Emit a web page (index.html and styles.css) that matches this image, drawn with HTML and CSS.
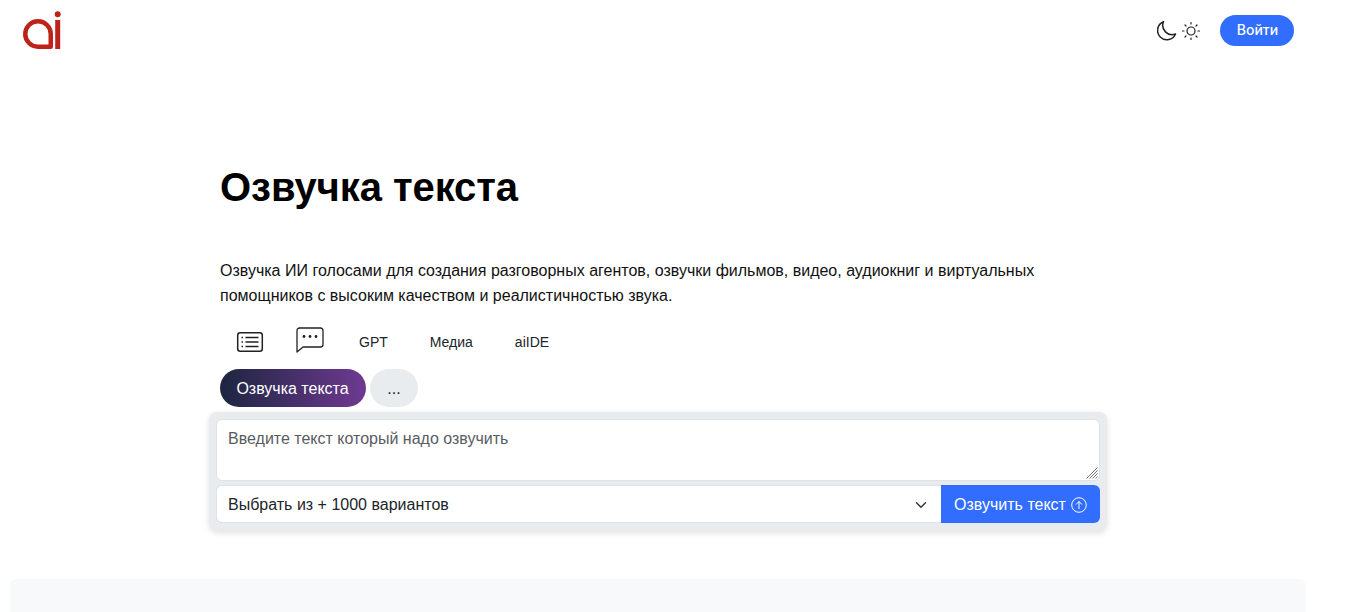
FILE: index.html
```html
<!DOCTYPE html>
<html lang="ru">
<head>
  <meta charset="UTF-8" />
  <meta name="viewport" content="width=device-width, initial-scale=1.0"/>
  <title>Озвучка текста</title>
  <link rel="stylesheet" href="styles.css">
</head>
<body>
  <div class="header">
    <a href="#" class="logo">
      <svg width="40" height="39" viewBox="0 0 40 39">
        <path d="M28.750 35.750 H16 A12.750 12.750 0 1 1 28.750 23 Z" fill="none" stroke="#bd2319" stroke-width="4.500" stroke-linejoin="round"/>
        <circle cx="35.700" cy="3.200" r="3" fill="#bd2319"/>
        <rect x="33.200" y="9" width="5" height="29" fill="#bd2319"/>
      </svg>
    </a>
    <div class="header-right">
      <div class="theme-icons">
        <svg width="20" height="20" viewBox="0 0 20 20">
          <path d="M6.500 .8 A9.300 9.300 0 1 0 18.500 13 A9.300 9.300 0 0 1 6.500 .8 Z" fill="none" stroke="#222" stroke-width="1.500" stroke-linejoin="round"/>
        </svg>
        <svg width="20" height="20" viewBox="0 0 20 20">
          <circle cx="10" cy="10" r="4" fill="none" stroke="#222" stroke-width="1.200"/>
          <path d="M10 1.500 V3 M10 17 V18.500 M1.500 10 H3 M17 10 H18.500 M4 4 L5 5 M15 15 L16 16 M4 16 L5 15 M15 5 L16 4" stroke="#222" stroke-width="1.200" stroke-linecap="round"/>
        </svg>
      </div>
      <button class="login-btn">Войти</button>
    </div>
  </div>

  <div class="main">
    <h1>Озвучка текста</h1>
    <p class="lead">Озвучка ИИ голосами для создания разговорных агентов, озвучки фильмов, видео, аудиокниг и виртуальных помощников с высоким качеством и реалистичностью звука.</p>

    <div class="nav-tabs">
      <a href="#" class="nav-item nav-icon">
        <svg width="28" height="22" viewBox="0 0 28 22">
          <rect x="1.700" y="1.700" width="24.600" height="18.600" rx="2.500" fill="none" stroke="#222" stroke-width="1.500"/>
          <path d="M9.500 6.500 H22.500 M9.500 11 H22.500 M9.500 15.500 H22.500 M5.500 6.500 H7 M5.500 11 H7 M5.500 15.500 H7" stroke="#222" stroke-width="1.500"/>
        </svg>
      </a>
      <a href="#" class="nav-item nav-icon nav-chat">
        <svg width="28" height="26" viewBox="0 0 28 26">
          <path d="M3.500 1 H24.500 A2.500 2.500 0 0 1 27 3.500 V17.500 A2.500 2.500 0 0 1 24.500 20 H7 L1 25 V3.500 A2.500 2.500 0 0 1 3.500 1 Z" fill="none" stroke="#222" stroke-width="1.300" stroke-linejoin="round"/>
          <circle cx="8" cy="9.500" r="1.400" fill="#222"/>
          <circle cx="14" cy="9.500" r="1.400" fill="#222"/>
          <circle cx="20" cy="9.500" r="1.400" fill="#222"/>
        </svg>
      </a>
      <a href="#" class="nav-item">GPT</a>
      <a href="#" class="nav-item">Медиа</a>
      <a href="#" class="nav-item">aiIDE</a>
    </div>

    <div class="pills">
      <button class="pill pill-active">Озвучка текста</button>
      <button class="pill">...</button>
    </div>

    <div class="tts-form">
      <div class="tts-text-wrap">
        <textarea class="tts-text" placeholder="Введите текст который надо озвучить"></textarea>
        <svg class="tts-grip" width="12" height="12" viewBox="0 0 12 12">
          <path d="M11.500 .5 L.5 11.500 M11.500 3.500 L3.500 11.500 M11.500 6.500 L6.500 11.500 M11.500 9.500 L9.500 11.500" stroke="#777" stroke-width="1"/>
        </svg>
      </div>
      <div class="tts-row">
        <div class="tts-select">
          <span>Выбрать из + 1000 вариантов</span>
          <svg width="12" height="12" viewBox="0 0 16 16">
            <path d="M2 5 L8 11 L14 5" fill="none" stroke="#343a40" stroke-width="2" stroke-linecap="round" stroke-linejoin="round"/>
          </svg>
        </div>
        <button class="tts-btn">
          Озвучить текст
          <svg width="16" height="16" viewBox="0 0 16 16">
            <circle cx="8" cy="8" r="7.300" fill="none" stroke="#fff" stroke-width="1"/>
            <path d="M8 12 V4.500 M5 7.500 L8 4.500 L11 7.500" fill="none" stroke="#fff" stroke-width="1"/>
          </svg>
        </button>
      </div>
    </div>
  </div>

  <div class="footer"></div>
</body>
</html>
```

FILE: styles.css
```css
* {
  box-sizing: border-box;
}

body {
  margin: 0;
  font-family: "Liberation Sans", Arial, sans-serif;
  background-color: white;
  color: #000;
}

.header {
  display: flex;
  justify-content: space-between;
  align-items: flex-start;
  height: 66px;
  padding: 11px 61px 0 22px;
}

.logo {
  display: block;
  height: 39px;
}

.header-right {
  display: flex;
  align-items: center;
  padding-top: 4px;
}

.theme-icons {
  display: flex;
  align-items: center;
  gap: 4px;
  margin-right: 19px;
}

.login-btn {
  width: 74px;
  height: 31px;
  padding: 0 0 2px 1px;
  border: none;
  border-radius: 16px;
  background-color: #316dff;
  color: white;
  font-family: Inter, sans-serif;
  font-size: 14px;
  font-weight: 500;
}

.main {
  width: 880px;
  margin-left: 220px;
}

h1 {
  margin: 0;
  padding-top: 97px;
  font-size: 40px;
  line-height: 48px;
  font-weight: bold;
  letter-spacing: -0.06px;
}

.lead {
  margin: 0;
  padding-top: 47px;
  font-size: 16px;
  line-height: 25px;
  color: #111;
}

.nav-tabs {
  display: flex;
  align-items: center;
  height: 36px;
  margin-top: 16px;
  padding-left: 16px;
}

.nav-item {
  margin-right: 42px;
  color: #212529;
  text-decoration: none;
  font-size: 14px;
}

.nav-icon {
  display: flex;
  margin-right: 32px;
}

.nav-chat {
  margin-top: -5px;
  margin-right: 35px;
}

.pills {
  display: flex;
  gap: 4px;
  margin-top: 9px;
}

.pill {
  height: 38px;
  width: 48px;
  padding: 2px 0 0;
  border: none;
  border-radius: 19px;
  background-color: #e9ecef;
  color: #212529;
  font-family: "Liberation Sans", Arial, sans-serif;
  font-size: 16px;
}

.pill-active {
  width: 146px;
  padding-right: 1px;
  background: linear-gradient(90deg, #1d2540, #6f3a92);
  color: white;
}

.tts-form {
  width: 898px;
  height: 119px;
  margin: 5px 0 0 -11px;
  padding: 7px 7px 0;
  border-radius: 8px;
  background-color: #e9ecef;
  box-shadow: 0 2px 6px rgba(0, 0, 0, 0.12);
}

.tts-text-wrap {
  position: relative;
}

.tts-text {
  display: block;
  width: 100%;
  height: 62px;
  padding: 10px 11px;
  border: 1px solid #dee2e6;
  border-radius: 6px;
  background-color: white;
  font-family: "Liberation Sans", Arial, sans-serif;
  font-size: 16px;
  line-height: 18px;
  resize: none;
}

.tts-text::placeholder {
  color: #595c5f;
}

.tts-grip {
  position: absolute;
  right: 2px;
  bottom: 2px;
}

.tts-row {
  display: flex;
  height: 38px;
  margin-top: 4px;
}

.tts-select {
  flex: 1;
  display: flex;
  align-items: center;
  justify-content: space-between;
  padding: 1px 14px 0 11px;
  border: 1px solid #dee2e6;
  border-right: none;
  border-radius: 6px 0 0 6px;
  background-color: white;
  color: #212529;
  font-size: 16px;
}

.tts-btn {
  display: flex;
  align-items: center;
  justify-content: center;
  gap: 5px;
  width: 159px;
  padding: 1px 0 0;
  border: none;
  border-radius: 0 6px 6px 0;
  background-color: #316dff;
  color: white;
  font-family: "Liberation Sans", Arial, sans-serif;
  font-size: 16px;
}

.footer {
  width: 1296px;
  height: 33px;
  margin: 48px 0 0 10px;
  border-radius: 6px 6px 0 0;
  background-color: #f8f9fa;
}
```
